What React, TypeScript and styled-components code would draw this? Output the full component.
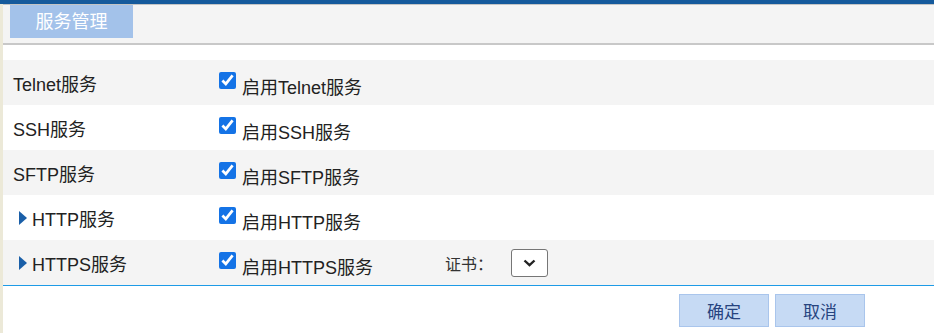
import React from "react";
import styled, { createGlobalStyle } from "styled-components";

const GlobalStyle = createGlobalStyle`
  html, body {
    margin: 0;
    padding: 0;
    background: #ffffff;
    font-family: "Liberation Sans", Arial, "Noto Sans CJK SC", sans-serif;
  }
`;

const Page = styled.div`
  width: 934px;
  height: 333px;
  display: flex;
  flex-direction: column;
  overflow: hidden;
`;

const TopBar = styled.div`
  height: 4px;
  background: #155a9c;
  flex: none;
`;

const Main = styled.div`
  flex: 1;
  display: flex;
`;

const LeftStripe = styled.div`
  width: 3px;
  background: #ece9d8;
  flex: none;
`;

const Content = styled.div`
  flex: 1;
  display: flex;
  flex-direction: column;
`;

const TabBar = styled.div`
  height: 38px;
  background: #f4f4f4;
  border-top: 1px solid #c4c4c4;
  border-bottom: 2px solid #c8c8c8;
  display: flex;
  align-items: flex-start;
  padding-left: 7px;
`;

const Tab = styled.div`
  width: 123px;
  height: 33px;
  background: #a3c2ea;
  color: #ffffff;
  font-size: 18px;
  font-family: "Noto Sans CJK SC", sans-serif;
  display: flex;
  align-items: center;
  justify-content: center;
  padding-bottom: 4px;
  box-sizing: border-box;
`;

const Spacer = styled.div`
  height: 15px;
`;

const Table = styled.div`
  display: flex;
  flex-direction: column;
  border-bottom: 1px solid #1e9be6;
`;

const Row = styled.div<{ $shaded: boolean }>`
  height: 45px;
  display: flex;
  align-items: center;
  background: ${(p) => (p.$shaded ? "#f4f4f4" : "#ffffff")};
  padding-left: 10px;
  font-size: 18px;
  color: #222222;
`;

const LabelCell = styled.div`
  width: 206px;
  display: flex;
  align-items: center;
  white-space: nowrap;
`;

const Arrow = styled.span`
  width: 0;
  height: 0;
  border-top: 7px solid transparent;
  border-bottom: 7px solid transparent;
  border-left: 8px solid #1a5fa8;
  margin-left: 6px;
  margin-right: 5px;
`;

const CheckCell = styled.label`
  width: 226px;
  display: flex;
  align-items: center;
  white-space: nowrap;
`;

const CheckBox = styled.input`
  width: 17px;
  height: 17px;
  margin: 0 6px 5px 0;
  accent-color: #1473e6;
`;

const CheckText = styled.span`
  padding-top: 6px;
`;

const CertLabel = styled.span`
  font-family: "Noto Sans CJK SC", sans-serif;
  font-size: 16px;
  color: #333333;
  margin-right: 18px;
`;

const SelectBox = styled.div`
  width: 37px;
  height: 28px;
  box-sizing: border-box;
  border: 1px solid #767676;
  border-radius: 3px;
  background: #ffffff;
  display: flex;
  align-items: center;
  justify-content: center;
`;

const ButtonBar = styled.div`
  display: flex;
  justify-content: flex-end;
  gap: 6px;
  padding-top: 8px;
  padding-right: 69px;
`;

const Button = styled.button`
  width: 90px;
  height: 33px;
  background: #c6daf4;
  border: 1px solid #a9c5ec;
  color: #27447f;
  font-size: 17px;
  font-family: "Noto Sans CJK SC", sans-serif;
  padding: 0;
  cursor: pointer;
`;

type Service = { label: string; name: string; expandable: boolean; cert?: boolean };

const services: Service[] = [
  { label: "Telnet服务", name: "启用Telnet服务", expandable: false },
  { label: "SSH服务", name: "启用SSH服务", expandable: false },
  { label: "SFTP服务", name: "启用SFTP服务", expandable: false },
  { label: "HTTP服务", name: "启用HTTP服务", expandable: true },
  { label: "HTTPS服务", name: "启用HTTPS服务", expandable: true, cert: true },
];

export default function App() {
  return (
    <>
      <GlobalStyle />
      <Page>
        <TopBar />
        <Main>
          <LeftStripe />
          <Content>
            <TabBar>
              <Tab>服务管理</Tab>
            </TabBar>
            <Spacer />
            <Table>
              {services.map((s, i) => (
                <Row key={s.label} $shaded={i % 2 === 0}>
                  <LabelCell>
                    {s.expandable && <Arrow />}
                    {s.label}
                  </LabelCell>
                  <CheckCell>
                    <CheckBox type="checkbox" defaultChecked />
                    <CheckText>{s.name}</CheckText>
                  </CheckCell>
                  {s.cert && (
                    <>
                      <CertLabel>证书：</CertLabel>
                      <SelectBox>
                        <svg width="13" height="8" viewBox="0 0 13 8">
                          <polyline
                            points="1.5,1.5 6.5,6.2 11.5,1.5"
                            fill="none"
                            stroke="#222"
                            strokeWidth="2.4"
                          />
                        </svg>
                      </SelectBox>
                    </>
                  )}
                </Row>
              ))}
            </Table>
            <ButtonBar>
              <Button>确定</Button>
              <Button>取消</Button>
            </ButtonBar>
          </Content>
        </Main>
      </Page>
    </>
  );
}
